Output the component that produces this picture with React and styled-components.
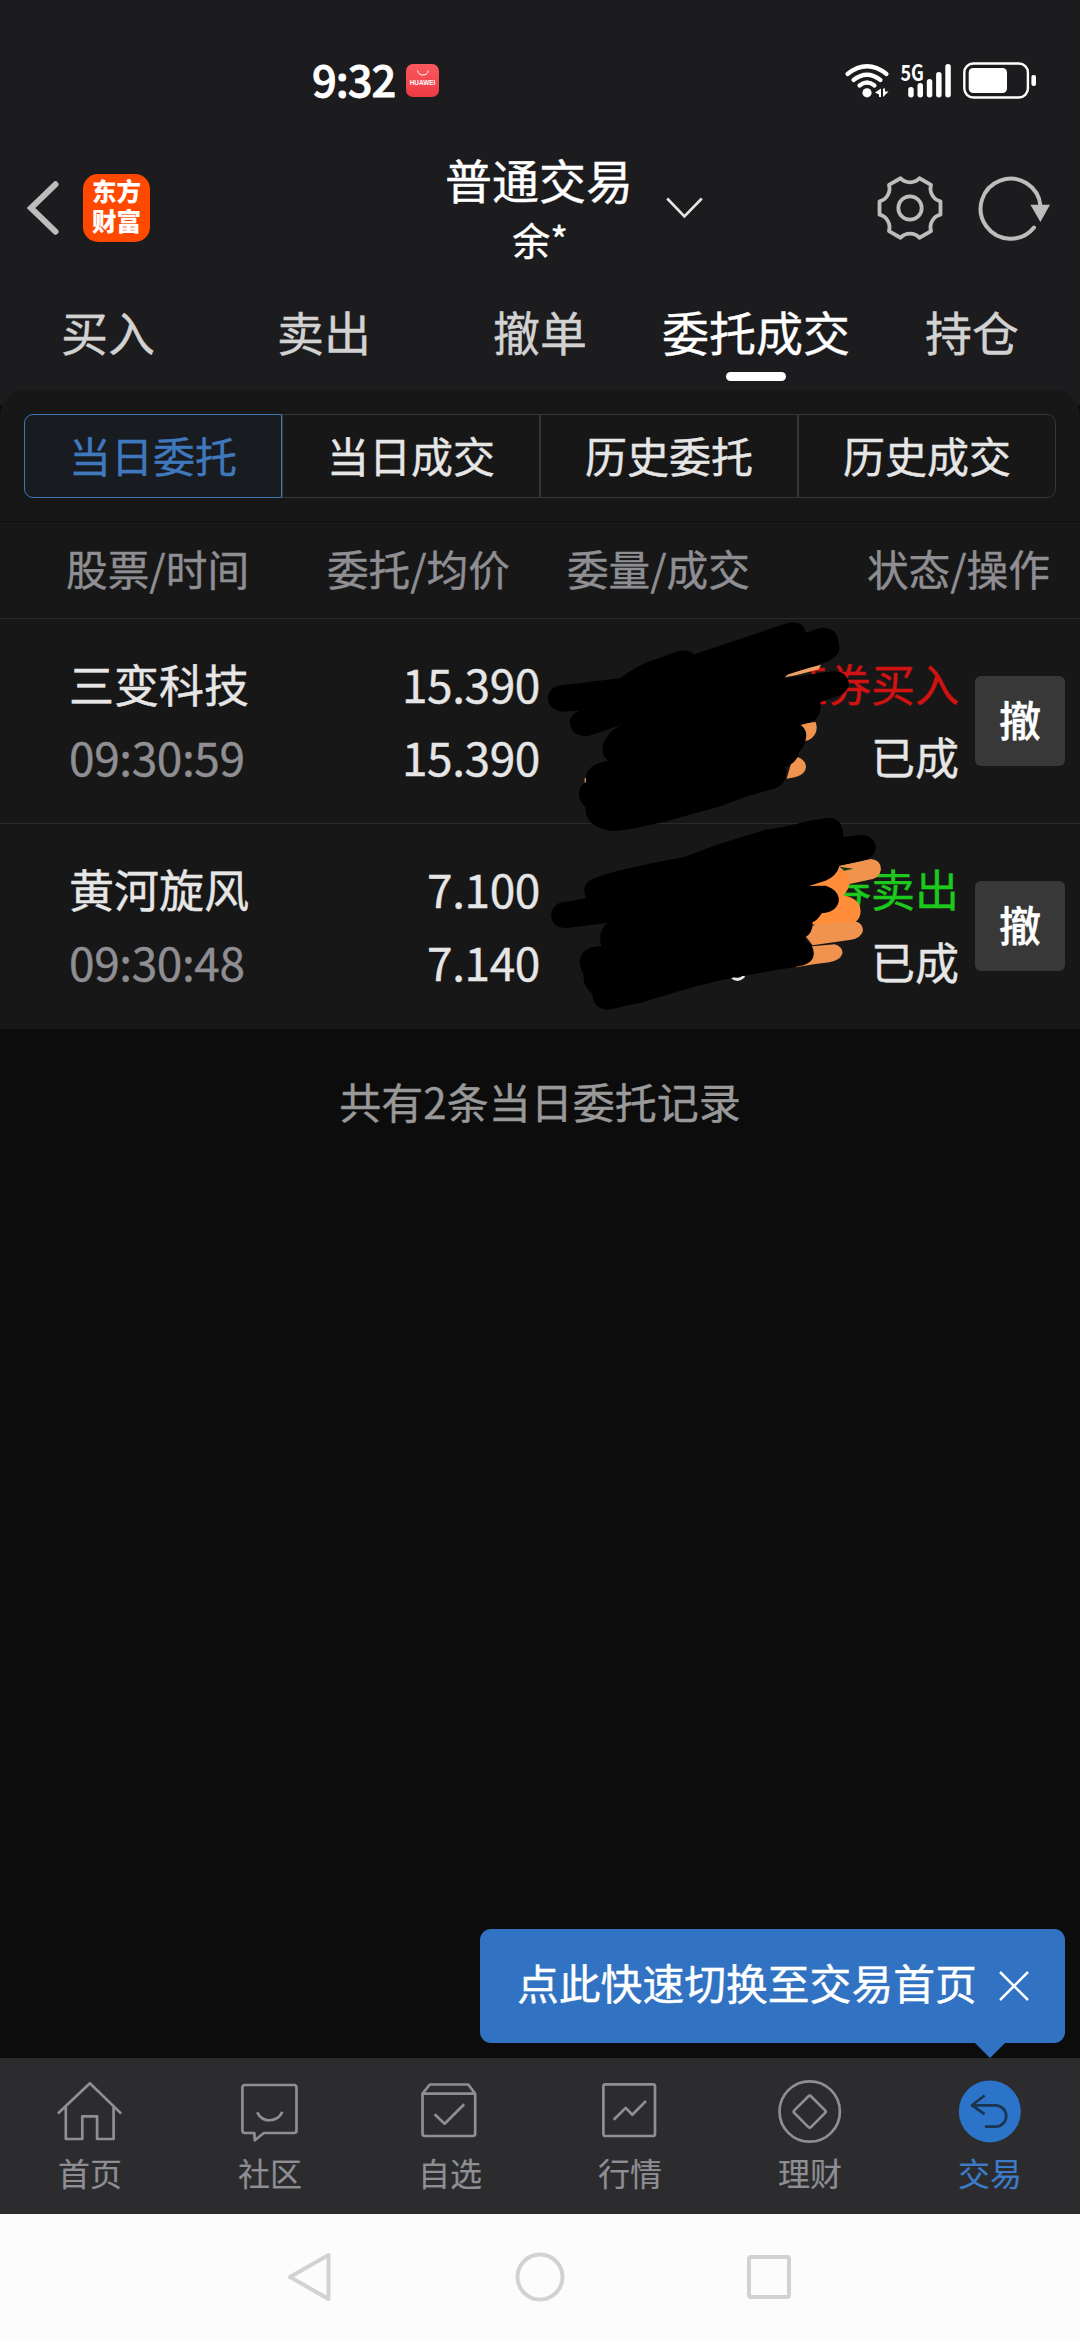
import React from "react";
import styled, { createGlobalStyle } from "styled-components";

const GlobalStyle = createGlobalStyle`
  *, *::before, *::after { box-sizing: border-box; }
  body {
    margin: 0;
    background: #0c0c0c;
    font-family: "Noto Sans CJK SC", "Noto Sans", sans-serif;
    -webkit-text-stroke: 0.4px currentColor;
  }
  svg { display: block; flex: none; overflow: visible; }
`;

const Screen = styled.div`
  width: 1080px;
  height: 2340px;
  display: flex;
  flex-direction: column;
  overflow: hidden;
  background: #0c0c0c;
  white-space: nowrap;
`;

const Top = styled.header`
  background: #1c1c1e;
`;

const StatusBar = styled.div`
  height: 145px;
  padding: 16px 43px 0 312px;
  display: flex;
  align-items: center;
`;

const Clock = styled.span`
  width: 94px;
  font-size: 43.5px;
  font-weight: 500;
  letter-spacing: -1px;
  line-height: 50px;
  color: #fff;
  padding-bottom: 4px;
  -webkit-text-stroke: 0.8px currentColor;
`;

const StoreBadge = styled.span`
  width: 33px;
  height: 33px;
  border-radius: 7px;
  background: linear-gradient(#f95a5e, #ec3a42);
  display: flex;
  flex-direction: column;
  align-items: center;
  padding-top: 6px;
  font: 700 6.4px/8px "Liberation Sans", Arial, sans-serif;
  -webkit-text-stroke: 0;
  color: #fff;
  gap: 3px;
`;

const StatusIcons = styled.div`
  margin-left: auto;
  display: flex;
`;

const TitleBar = styled.div`
  height: 126px;
  padding: 0 29px 0 26px;
  display: grid;
  grid-template-columns: 1fr auto 1fr;
  align-items: center;
`;

const TitleLeft = styled.div`
  display: flex;
  align-items: center;
  gap: 24px;
`;

const TitleRight = styled.div`
  display: flex;
  align-items: center;
  padding-left: 33px;
`;

const Logo = styled.div`
  width: 67px;
  height: 68px;
  border-radius: 15px;
  background: #ff4800;
  color: #fff;
  font-size: 24.5px;
  font-weight: 900;
  line-height: 29.5px;
  text-align: center;
  padding-top: 2px;
  -webkit-text-stroke: 0;
`;

const Title = styled.div`
  text-align: center;
  color: #fff;
  padding-left: 1px;
`;

const TitleName = styled.div`
  font-size: 47px;
  line-height: 62px;
`;

const TitleUser = styled.div`
  font-size: 38px;
  line-height: 58px;
  padding-left: 2px;
`;

const Tabs = styled.nav`
  height: 119px;
  display: grid;
  grid-template-columns: repeat(5, 1fr);
`;

const Tab = styled.div`
  padding-top: 30px;
  display: flex;
  flex-direction: column;
  align-items: center;
  gap: 11px;
  font-size: 47px;
  line-height: 60px;
  color: ${(p) => (p.$active ? "#fff" : "#d2d2d2")};
  &::after {
    content: "";
    width: 60px;
    height: 9px;
    border-radius: 5px;
    background: ${(p) => (p.$active ? "#fff" : "transparent")};
  }
`;

const Backdrop = styled.div`
  background: linear-gradient(#1c1c1e 0 15px, #0c0c0c 15px);
`;

const FilterPanel = styled.div`
  padding: 24px 24px 23px;
  border-radius: 26px 26px 0 0;
  border-bottom: 1px solid #0d0d0d;
  background: #171717;
`;

const Segments = styled.div`
  display: grid;
  grid-template-columns: repeat(4, 1fr);
  height: 84px;
`;

const Segment = styled.div`
  border: 1px solid ${(p) => (p.$active ? "#4076b8" : "#363636")};
  background: ${(p) => (p.$active ? "#181b20" : "transparent")};
  color: ${(p) => (p.$active ? "#3f78bd" : "#e6e6e6")};
  font-size: 42px;
  line-height: 79px;
  text-align: center;
  &:first-child { border-radius: 9px 0 0 9px; }
  &:last-child { border-radius: 0 9px 9px 0; }
`;

const TableHead = styled.div`
  height: 97px;
  padding: 0 30px 0 66px;
  border-bottom: 1px solid #2a2a2a;
  background: #171717;
  display: grid;
  grid-template-columns: 204px 240px 240px 300px;
  font-size: 41.7px;
  line-height: 93px;
  color: #8e8e93;
  text-align: right;
  & > :first-child { text-align: left; }
`;

const Orders = styled.div`
  position: relative;
  background: #171717;
`;

const OrderRow = styled.div`
  height: 205px;
  padding: 0 15px 0 69px;
  display: grid;
  grid-template-columns: 240px 231px 419px 90px;
  &:not(:last-of-type) { border-bottom: 1px solid #2a2a2a; }
`;

const Cell = styled.div`
  padding-top: 27.5px;
  display: flex;
  flex-direction: column;
  align-items: ${(p) => (p.$end ? "flex-end" : "flex-start")};
`;

const Line = styled.span`
  font-size: ${(p) => p.$size || 45}px;
  letter-spacing: ${(p) => (p.$size === 46 ? "-0.4px" : "0")};
  line-height: 73px;
  color: ${(p) => p.$color || "#e6e6e6"};
`;

const CancelButton = styled.button`
  align-self: start;
  margin: 57px 0 0 16px;
  width: 90px;
  height: 90px;
  padding: 0 0 4px;
  border: 0;
  border-radius: 6px;
  background: #383838;
  color: #fff;
  font: 500 42px/60px "Noto Sans CJK SC", sans-serif;
`;

const Scribble = styled.svg`
  position: absolute;
  left: 500px;
  top: -19px;
`;

const Content = styled.main`
  flex: 1;
  position: relative;
`;

const Summary = styled.p`
  margin: 0;
  padding-top: 42px;
  text-align: center;
  font-size: 42px;
  line-height: 60px;
  color: #999;
`;

const Tooltip = styled.div`
  position: absolute;
  right: 15px;
  bottom: 15px;
  width: 585px;
  height: 114px;
  padding: 0 35px 0 37px;
  border-radius: 11px;
  background: #3173c2;
  color: #fff;
  font-size: 41.8px;
  line-height: 106px;
  display: flex;
  justify-content: space-between;
  & > svg { margin-top: 41px; }
  &::after {
    content: "";
    position: absolute;
    top: 100%;
    right: 60px;
    border: 15px solid transparent;
    border-top-color: #3173c2;
    border-bottom: 0;
  }
`;

const TabBar = styled.nav`
  height: 156px;
  padding-top: 17px;
  background: #2c2c2e;
  display: grid;
  grid-template-columns: repeat(6, 1fr);
  -webkit-text-stroke: 0.2px currentColor;
`;

const TabItem = styled.div`
  display: flex;
  flex-direction: column;
  align-items: center;
  font-size: 32px;
  line-height: 50px;
  color: ${(p) => (p.$active ? "#3b7bc8" : "#8e8e93")};
`;

const SystemNav = styled.div`
  height: 126px;
  background: #fcfcfc;
  display: flex;
  justify-content: center;
  align-items: center;
  gap: 180px;
`;

const TAU = Math.PI * 2;
const gearPath = (() => {
  const at = (deg) => {
    const a = (deg / 360) * TAU;
    return `${(34 + 31.2 * Math.cos(a)).toFixed(2)} ${(34 + 31.2 * Math.sin(a)).toFixed(2)}`;
  };
  let d = `M${at(-12.4)}`;
  for (let k = 0; k < 6; k++) {
    d += `L${at(k * 60 + 12.4)}A13 13 0 0 0 ${at(k * 60 + 47.6)}`;
  }
  return d + "Z";
})();

const Glyph = ({ children }) => (
  <svg width="72" height="72" viewBox="0 0 72 72" fill="none" stroke="currentColor" strokeWidth="2.7" strokeLinejoin="round">
    {children}
  </svg>
);

const footer = [
  ["首页", <Glyph><path d="M3.9 38.6L35.9 8.2L67.2 38.6M11.8 32V64H28.3V41.3H43.1V64H59.6V32" /></Glyph>],
  ["社区", <Glyph><path d="M11 10H60Q62.5 10 62.5 12.5V55.5Q62.5 58 60 58H29.8L20.8 65.3L20.3 58H11Q8.4 58 8.4 55.5V12.5Q8.4 10 11 10Z" /><path d="M23.2 37.3C28.5 48 43 48 48.4 36.9" /></Glyph>],
  ["自选", <Glyph><path d="M8.5 18.7L15.8 9.5H54.3L61.2 18.7V58.5Q61.2 61 58.7 61H11Q8.5 61 8.5 58.5ZM8.5 18.7H61.2M20.6 39.2L30.6 48.7L50.2 29.3" /></Glyph>],
  ["行情", <Glyph><rect x="9.4" y="9.3" width="51.6" height="51.7" rx="2" /><path d="M19.7 44.7L31.7 32.9L38.3 39.8L52 26" /></Glyph>],
  ["理财", <Glyph><circle cx="35.7" cy="36.5" r="30.2" /><path d="M34.2 21.5Q35.7 20 37.2 21.5L50.9 35.1Q52.4 36.6 50.9 38.1L37.2 51.9Q35.7 53.4 34.2 51.9L20.5 38.1Q19 36.6 20.5 35.1Z" /></Glyph>],
  ["交易", <Glyph><circle cx="35.8" cy="36.4" r="31" fill="#2b74c9" stroke="none" /><path d="M30.6 20.5L18 30.3L30.6 39.2M18 30.3H41.5A10.7 10.7 0 0 1 41.5 51.7H30.9" stroke="#1b3450" /></Glyph>],
];

const orders = [
  { name: "三变科技", time: "09:30:59", price: "15.390", avg: "15.390", side: "证券买入", color: "#d01212" },
  { name: "黄河旋风", time: "09:30:48", price: "7.100", avg: "7.140", side: "证券卖出", color: "#1cc91c" },
];

const tabs = ["买入", "卖出", "撤单", "委托成交", "持仓"];
const segments = ["当日委托", "当日成交", "历史委托", "历史成交"];
const columns = ["股票/时间", "委托/均价", "委量/成交", "状态/操作"];

export default function App() {
  return (
    <Screen>
      <GlobalStyle />
      <Top>
        <StatusBar>
          <Clock>9:32</Clock>
          <StoreBadge>
            <svg width="12" height="6" viewBox="0 0 12 6" fill="none" stroke="#fff" strokeWidth="1">
              <path d="M.6 .5Q1.5 5 6 5Q10.5 5 11.4 .5" />
            </svg>
            HUAWEI
          </StoreBadge>
          <StatusIcons>
            <svg width="193" height="38" viewBox="844 62 193 38" fill="#fff">
              <g fill="none" stroke="#fff" strokeLinecap="round" strokeWidth="4.2">
                <path d="M847.5 74Q867 58.500 886.500 74" />
                <path d="M853.500 80Q867 69.500 880.500 80" />
                <path d="M859.500 85.500Q867 79.500 874.500 85.500" />
              </g>
              <circle cx="867" cy="92.800" r="4.600" />
              <path d="M881 88.500V97H879V94.500L875 92.500ZM883 88.500V97L888.500 91.500H885V88.500Z" />
              <text x="900.500" y="81" fontFamily="Noto Sans CJK SC, sans-serif" fontSize="22" fontWeight="700" textLength="23.500" lengthAdjust="spacingAndGlyphs">5G</text>
              <rect x="908.200" y="87" width="5.500" height="10.500" rx="2.700" />
              <rect x="917.500" y="83" width="5.500" height="14.500" rx="2.700" />
              <rect x="926.800" y="79" width="5.500" height="18.500" rx="2.700" />
              <rect x="936.100" y="72" width="5.500" height="25.500" rx="2.700" />
              <rect x="945.300" y="64" width="5.500" height="33.500" rx="2.700" />
              <rect x="964.300" y="63.500" width="63.600" height="34" rx="9" fill="none" stroke="#fff" strokeWidth="2.400" />
              <rect x="968.700" y="68" width="38.300" height="25" rx="4.500" />
              <rect x="1031.400" y="75" width="4.600" height="11" rx="2" />
            </svg>
          </StatusIcons>
        </StatusBar>

        <TitleBar>
          <TitleLeft>
            <svg width="33" height="56" viewBox="0 0 33 56" fill="none" stroke="#bdbdbd" strokeWidth="6" strokeLinecap="round">
              <path d="M29.500 4.300L5 28L29.500 51.700" />
            </svg>
            <Logo>东方<br />财富</Logo>
          </TitleLeft>
          <Title>
            <TitleName>普通交易</TitleName>
            <TitleUser>余*</TitleUser>
          </Title>
          <TitleRight>
            <svg width="37" height="22" viewBox="0 0 37 22" fill="none" stroke="#e6e6e6" strokeWidth="2.600">
              <path d="M1.200 1.500L18.400 19.300L35.800 1.500" />
            </svg>
            <svg width="68" height="68" viewBox="0 0 68 68" fill="none" stroke="#bdbdbd" strokeWidth="3.800" strokeLinejoin="round" style={{ marginLeft: "auto" }}>
              <path d={gearPath} />
              <circle cx="34" cy="34" r="11.700" />
            </svg>
            <svg width="73" height="68" viewBox="978 174 73 68" style={{ marginLeft: 34 }}>
              <path d="M1034 227.500A30 30 0 1 1 1040.500 206" fill="none" stroke="#bdbdbd" strokeWidth="4" strokeLinecap="round" />
              <path d="M1030.400 204.700H1050L1040.400 222Z" fill="#bdbdbd" />
            </svg>
          </TitleRight>
        </TitleBar>

        <Tabs>
          {tabs.map((t) => (
            <Tab key={t} $active={t === "委托成交"}>{t}</Tab>
          ))}
        </Tabs>
      </Top>

      <Backdrop>
        <FilterPanel>
          <Segments>
            {segments.map((s, i) => (
              <Segment key={s} $active={i === 0}>{s}</Segment>
            ))}
          </Segments>
        </FilterPanel>
      </Backdrop>

      <TableHead>
        {columns.map((c) => <span key={c}>{c}</span>)}
      </TableHead>

      <Orders>
        {orders.map((o) => (
          <OrderRow key={o.name}>
            <Cell>
              <Line>{o.name}</Line>
              <Line $size={46} $color="#8e8e93">{o.time}</Line>
            </Cell>
            <Cell $end>
              <Line $size={46}>{o.price}</Line>
              <Line $size={46}>{o.avg}</Line>
            </Cell>
            <Cell $end>
              <Line $size={44} $color={o.color}>{o.side}</Line>
              <Line $size={44}>已成</Line>
            </Cell>
            <CancelButton>撤</CancelButton>
          </OrderRow>
        ))}
        <Scribble width="580" height="440" viewBox="0 0 1568 1320" preserveAspectRatio="none">
          {/* marker strokes under the black ones */}
          <g fill="#f0934f">
            <path d="M770 232L780 220L868 194L862 208L800 226Z" fill="#eda066" />
            <path d="M800 372L853 366Q860 385 852 402Q842 420 825 423Z" />
            <path d="M790 478L806 472Q828 482 827 502Q824 532 775 536Z" />
            <path d="M229 534L235 534V552L229 550Z" />
            <path d="M900 800L1003 777Q1030 780 1030 808Q1028 836 995 840L920 858Z" />
            <path d="M820 1000L860 966L965 965Q982 972 981 993Q976 1016 945 1020L845 1036Z" />
            <path d="M830 1040L905 1033Q927 1040 926 1060Q920 1082 890 1087L848 1093L800 1102Z" />
          </g>
          <path d="M830 860L915 806Q945 815 945 850Q942 872 928 886Q974 895 975 935Q974 955 960 967L840 974Z" fill="#ff8d3a" />
          <path d="M918 800L955 806L930 812Z" fill="#123a12" />
          <path d="M628 1133Q645 1146 660 1128" fill="none" stroke="#e6e6e6" strokeWidth="8" />
          <path d="M165 256L325 235Q370 195 415 180L470 158Q505 143 525 163L780 68Q820 60 827 98L865 84Q895 80 910 104Q921 135 916 155Q905 180 865 193L780 223Q770 228 768 235L900 214Q935 210 943 248Q943 272 920 285L866 307Q872 350 840 367L813 375Q832 390 827 415Q824 440 808 456Q804 488 772 501Q782 550 742 566L670 588L600 617L440 667L350 688Q315 693 300 693Q225 677 232 622Q205 597 217 562Q223 550 233 546Q225 495 292 482Q270 463 280 430Q295 385 345 368L240 408Q195 412 188 368Q192 340 215 332L165 335Q130 326 130 295Q132 262 165 256Z" />
          <path d="M400 792L500 770L590 733L715 690L765 681L850 659L890 653Q930 657 928 712L975 704Q1014 706 1016 745Q1012 775 980 782L918 797Q910 828 880 842L835 858L880 857Q916 870 916 900Q913 936 870 940Q855 965 845 966Q846 1000 825 1012Q827 1028 840 1032Q850 1050 848 1065Q845 1094 800 1100L620 1135L520 1162L380 1208L290 1230Q250 1223 250 1182Q223 1160 226 1122Q210 1095 218 1070Q230 1038 274 1038Q263 995 290 969L180 984Q142 985 138 945Q142 907 180 905L233 894Q218 857 245 840Q280 820 400 792Z" />
        </Scribble>
      </Orders>

      <Content>
        <Summary>共有2条当日委托记录</Summary>
        <Tooltip>
          点此快速切换至交易首页
          <svg width="32" height="32" viewBox="0 0 32 32" stroke="#fff" strokeWidth="2.500">
            <path d="M2 2L30 30M30 2L2 30" />
          </svg>
        </Tooltip>
      </Content>

      <TabBar>
        {footer.map(([label, icon]) => (
          <TabItem key={label} $active={label === "交易"}>
            {icon}
            {label}
          </TabItem>
        ))}
      </TabBar>

      <SystemNav>
        <svg width="50" height="50" viewBox="0 0 50 50" fill="none" stroke="#d2d2d2" strokeWidth="4" strokeLinejoin="round">
          <path d="M43.500 3V47L5 25Z" />
        </svg>
        <svg width="50" height="50" viewBox="0 0 50 50" fill="none" stroke="#d2d2d2" strokeWidth="4">
          <circle cx="25" cy="25" r="22.500" />
        </svg>
        <svg width="50" height="50" viewBox="0 0 50 50" fill="none" stroke="#d2d2d2" strokeWidth="4">
          <rect x="4" y="5" width="40" height="40" rx="2" />
        </svg>
      </SystemNav>
    </Screen>
  );
}
